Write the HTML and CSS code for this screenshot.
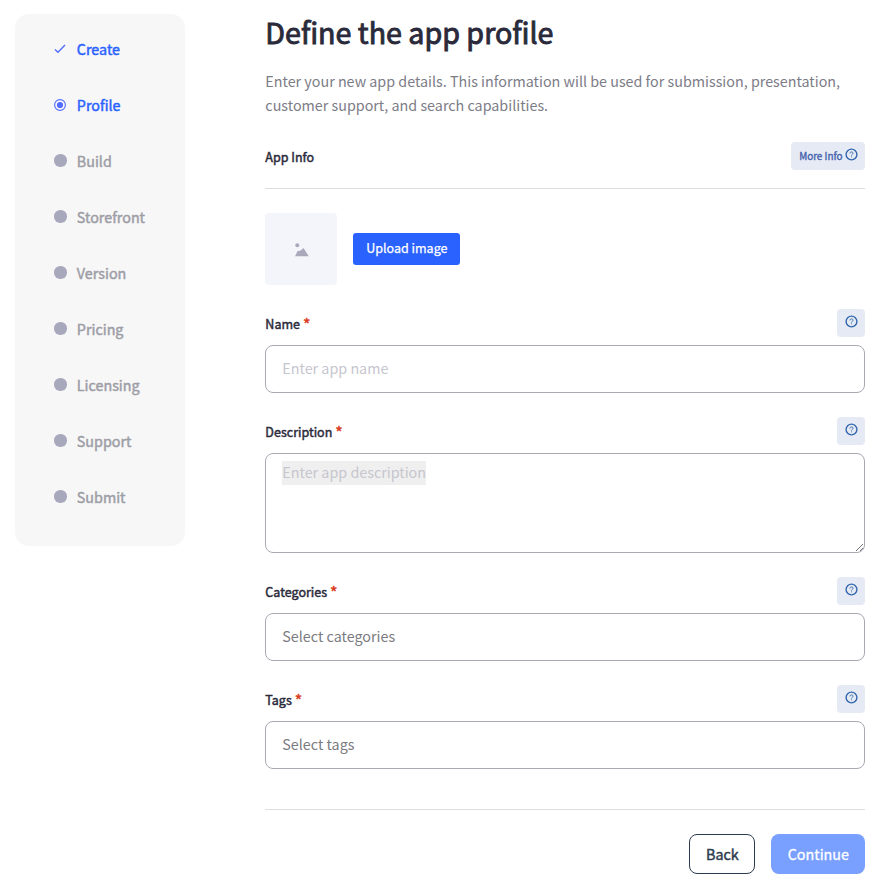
FILE: index.html
```html
<!DOCTYPE html>
<html lang="en">
<head>
<meta charset="utf-8">
<title>Define the app profile</title>
<link rel="stylesheet" href="styles.css">
</head>
<body>
<svg width="0" height="0" class="defs">
  <symbol id="help" viewBox="0 0 13 13">
    <circle cx="6.5" cy="6.5" r="5.4" fill="none" stroke="currentColor" stroke-width="1.4"/>
    <path d="M4.9 5.4C4.9 3.4 8.1 3.5 8.1 5.2C8.1 6.3 6.5 6.2 6.5 7.5M6.5 8.4V9.3" fill="none" stroke="currentColor" stroke-width=".9"/>
  </symbol>
</svg>
<div class="page">
  <nav class="steps">
    <div class="step active"><svg class="mark" viewBox="0 0 12 12"><path d="M1 6.4L4 9.3L11 2.1" fill="none" stroke="currentColor" stroke-width="1.4"/></svg><span>Create</span></div>
    <div class="step active"><svg class="mark" viewBox="0 0 12 12"><circle cx="6" cy="6" r="5.4" fill="none" stroke="currentColor" stroke-width="1.1"/><circle cx="6" cy="6" r="3.1" fill="currentColor"/></svg><span>Profile</span></div>
    <div class="step"><i class="mark dot"></i><span>Build</span></div>
    <div class="step"><i class="mark dot"></i><span>Storefront</span></div>
    <div class="step"><i class="mark dot"></i><span>Version</span></div>
    <div class="step"><i class="mark dot"></i><span>Pricing</span></div>
    <div class="step"><i class="mark dot"></i><span>Licensing</span></div>
    <div class="step"><i class="mark dot"></i><span>Support</span></div>
    <div class="step"><i class="mark dot"></i><span>Submit</span></div>
  </nav>
  <main class="main">
    <h1><span>Define the app profile</span></h1>
    <p class="intro"><span>Enter your new app details. This information will be used for submission, presentation,</span><br><span>customer support, and search capabilities.</span></p>
    <div class="section-head"><h2 class="label"><span>App Info</span></h2><button class="help more"><span>More Info</span><svg><use href="#help"/></svg></button></div>
    <div class="upload">
      <div class="thumb"><svg viewBox="0 0 14 14"><circle cx="2.3" cy="2.2" r="2" fill="#a9a9bc"/><path d="M0 13.3L2.6 8L5.4 7.8L8.5 5L13.8 13.3Z" fill="#a9a9bc"/></svg></div>
      <button class="upload-btn"><span>Upload image</span></button>
    </div>
    <div class="field"><div class="field-head"><label class="label"><span>Name</span><b>*</b></label><button class="help"><svg><use href="#help"/></svg></button></div>
      <div class="input hint"><span>Enter app name</span></div></div>
    <div class="field"><div class="field-head"><label class="label"><span>Description</span><b>*</b></label><button class="help"><svg><use href="#help"/></svg></button></div>
      <div class="input area hint"><span class="marked">Enter app description</span><svg class="grip" viewBox="0 0 9 9"><path d="M1 8L8 1M5 8L8 5" stroke="#777" stroke-width="1" fill="none"/></svg></div></div>
    <div class="field"><div class="field-head"><label class="label"><span>Categories</span><b>*</b></label><button class="help"><svg><use href="#help"/></svg></button></div>
      <div class="input"><span>Select categories</span></div></div>
    <div class="field"><div class="field-head"><label class="label"><span>Tags</span><b>*</b></label><button class="help"><svg><use href="#help"/></svg></button></div>
      <div class="input"><span>Select tags</span></div></div>
    <div class="actions"><button class="back"><span>Back</span></button><button class="continue"><span>Continue</span></button></div>
  </main>
</div>
</body>
</html>
```
FILE: styles.css
```css
* { box-sizing: border-box; }
body { margin: 0; background: #fff; font-family: "Noto Sans CJK SC", sans-serif; font-size: 14.32px; color: #2a2a3a; }
button { font: inherit; border: 0; margin: 0; padding: 0; display: flex; align-items: center; justify-content: center; }
.defs { display: block; }
.page { display: flex; align-items: flex-start; height: 883px; overflow: hidden; }
.steps { width: 170.5px; height: 531.5px; margin: 14px 0 0 14.75px; padding: 6.5px 0 0 39.6px; background: #f7f7f7; border-radius: 14px; flex: none; }
.step { height: 56px; display: flex; align-items: center; gap: 10.5px; color: #9d9da6; line-height: 24px; -webkit-text-stroke: .45px; }
.active { color: #2962ff; }
.mark { width: 12px; height: 12px; flex: none; color: #526cfe; }
.dot { width: 12.5px; height: 12.5px; margin-right: -.5px; border-radius: 50%; background: #a8a8bc; }
.main { width: 600px; margin-left: 80.1px; flex: none; }
h1 { margin: 12px 0 0; font-size: 28.65px; line-height: 40px; font-weight: 400; -webkit-text-stroke: .9px; }
.intro { margin: 17px 0 0; line-height: 24px; color: #7c7c87; white-space: nowrap; }
.section-head { display: flex; justify-content: space-between; margin-top: 25px; height: 47px; border-bottom: 1px solid #dedee2; }
.label { margin: 0; font-size: 12.53px; line-height: 30px; font-weight: 400; -webkit-text-stroke: .45px; display: flex; gap: 3px; }
.label b { color: #d93a20; font-weight: 400; font-size: 16px; }
.help { width: 28px; height: 28px; background: #e6eaf5; border-radius: 4px; color: #3267ad; padding-bottom: 3px; }
.help svg { width: 13px; height: 13px; }
.more { width: 74px; font-size: 9.9px; color: #4463ad; gap: 2px; }
.more svg { color: #3267ad; }
.more span { -webkit-text-stroke: .35px; position: relative; top: 1px; }
.upload { display: flex; align-items: center; gap: 16px; margin-top: 24px; height: 72px; }
.thumb { width: 72px; height: 72px; background: #f4f5fa; border-radius: 4px; display: flex; align-items: center; justify-content: center; }
.thumb svg { width: 14px; height: 14px; margin: 1px 0 0 1px; }
.upload-btn { width: 107px; height: 32px; background: #2962ff; color: #fff; border-radius: 3px; font-size: 12.53px; padding-bottom: 3px; -webkit-text-stroke: .25px; }
.field { margin-top: 24px; }
.field-head { display: flex; justify-content: space-between; height: 36px; }
.input { height: 48px; border: 1px solid #a9a9b4; border-radius: 8px; padding: 10px 16px; line-height: 24px; color: #7b7b7f; }
.hint { color: #c6c6ce; }
.area { height: 100px; padding-top: 7px; position: relative; }
.marked { background: #efefef; display: block; width: max-content; height: 24px; line-height: 22px; }
.grip { position: absolute; right: 0; bottom: 0; width: 9px; height: 9px; }
.actions { margin-top: 40px; border-top: 1px solid #dedee2; padding-top: 24px; display: flex; justify-content: flex-end; gap: 16px; }
.actions button { height: 40px; border-radius: 8px; padding-bottom: 2px; -webkit-text-stroke: .45px; }
.back { width: 66px; border: 1px solid #2d3b50; background: #fff; color: #2d3b50; }
.actions .continue { width: 94px; background: #799fff; color: #fff; -webkit-text-stroke: .3px; }
```
